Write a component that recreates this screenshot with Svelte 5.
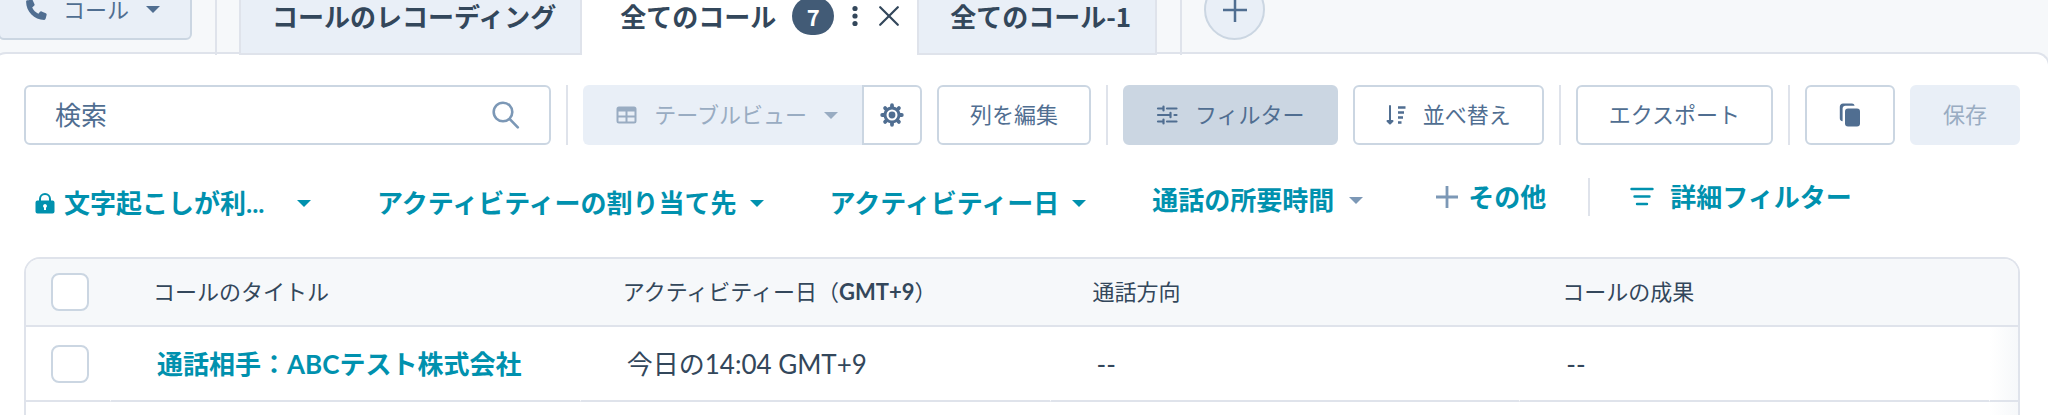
<script>
    let search = $state('');

    const tabs = [
        { label: 'コールのレコーディング' },
        { label: '全てのコール', count: 7, active: true },
        { label: '全てのコール-1' }
    ];

    const filters = [
        { label: '文字起こしが利...', kind: 'locked' },
        { label: 'アクティビティーの割り当て先', kind: 'pinned' },
        { label: 'アクティビティー日', kind: 'pinned' },
        { label: '通話の所要時間', kind: 'unset' }
    ];

    const calls = [
        { title: '通話相手：ABCテスト株式会社', date: '今日の14:04 GMT+9', direction: '--', outcome: '--' },
        { title: '', date: '', direction: '', outcome: '' }
    ];
</script>

{#snippet caret()}
    <svg class="caret" width="14" height="7" viewBox="0 0 14 7" aria-hidden="true"><path d="M0 0h14L7 7z" fill="currentColor" /></svg>
{/snippet}

<div class="page">
    <header class="topbar">
        <button class="object-switch" aria-haspopup="menu">
            <svg width="22" height="22" viewBox="0 0 22 22" aria-hidden="true">
                <path d="M3.6 1.2 6 .3c.7-.2 1.300 0 1.600.7l1.900 4.200c.3.6.1 1.200-.4 1.600L7.200 8.400c1.300 2.700 3.400 4.900 6.200 6.300l1.600-1.900c.4-.5 1-.7 1.600-.4l4.200 1.800c.7.3 1 1 .8 1.700l-1 3.900c-.2.7-.7 1.100-1.400 1.100C9.300 20.900 1.100 12.700 1.100 2.800c0-.8.300-1.400 1-1.600z" fill="currentColor" />
            </svg>
            <span>コール</span>
            {@render caret()}
        </button>
        <div class="tabs">
            {#each tabs as tab}
                <div class="tab" class:active={tab.active}>
                    <a href="#view">{tab.label}</a>
                    {#if tab.active}
                        <span class="badge">{tab.count}</span>
                        <button class="bare dots" aria-label="オプション">
                            <svg width="6" height="22" viewBox="0 0 6 22" fill="currentColor" aria-hidden="true">
                                <circle cx="3" cy="3.500" r="2.600" /><circle cx="3" cy="11" r="2.600" /><circle cx="3" cy="18.500" r="2.600" />
                            </svg>
                        </button>
                        <button class="bare" aria-label="閉じる">
                            <svg width="20" height="20" viewBox="0 0 20 20" fill="none" stroke="currentColor" stroke-width="2.200" stroke-linecap="round" aria-hidden="true">
                                <path d="M1.200 1.200l17.600 17.600M18.800 1.200 1.200 18.800" />
                            </svg>
                        </button>
                    {/if}
                </div>
            {/each}
        </div>
        <button class="add-view" aria-label="ビューを追加">
            <svg width="24" height="24" viewBox="0 0 24 24" stroke="currentColor" stroke-width="2.500" aria-hidden="true"><path d="M12 0v24M0 12h24" /></svg>
        </button>
    </header>

    <main class="panel">
        <div class="toolbar">
            <label class="search">
                <input type="text" bind:value={search} placeholder="検索" aria-label="検索" />
                <svg width="28" height="28" viewBox="0 0 28 28" fill="none" stroke="currentColor" stroke-width="2.600" stroke-linecap="round" aria-hidden="true">
                    <circle cx="11" cy="11" r="9.300" /><path d="M17.800 18.200l8 8.200" />
                </svg>
            </label>
            <span class="rule"></span>
            <div class="view-group">
                <button class="btn off view" disabled>
                    <svg width="21" height="18" viewBox="0 0 21 18" aria-hidden="true">
                        <path fill-rule="evenodd" d="M3 .5h15A2.500 2.500 0 0 1 20.500 3v12a2.500 2.500 0 0 1-2.500 2.500H3A2.500 2.500 0 0 1 .5 15V3A2.500 2.500 0 0 1 3 .5zM2.500 5.500v4h7v-4zM11.500 5.500v4h7v-4zM2.500 11.500v4h7v-4zM11.500 11.500v4h7v-4z" fill="currentColor" />
                    </svg>
                    <span>テーブルビュー</span>
                    {@render caret()}
                </button>
                <button class="btn gear" aria-label="設定">
                    <svg width="24" height="24" viewBox="-12 -12 24 24" aria-hidden="true">
                        <circle r="7" fill="none" stroke="currentColor" stroke-width="3" />
                        <circle r="3.400" fill="currentColor" />
                        <g stroke="currentColor" stroke-width="3.800" stroke-linecap="round">
                            <path d="M0-9.800V-8M0 9.800V8M-9.800 0H-8M9.800 0H8M-6.900-6.900l1.200 1.200M6.900 6.900 5.700 5.700M-6.900 6.900l1.200-1.200M6.900-6.900 5.700-5.700" />
                        </g>
                    </svg>
                </button>
            </div>
            <button class="btn">列を編集</button>
            <span class="rule"></span>
            <button class="btn pressed" aria-pressed="true">
                <svg width="22" height="20" viewBox="0 0 22 20" fill="none" stroke="currentColor" stroke-width="2.200" stroke-linecap="round" aria-hidden="true">
                    <path d="M2 3.500h5.500M11 3.500h9.500M2 10h12.500M18.500 10h2M2 16.500h5.500M11 16.500h9.500M7.500 1.500v4M14.500 7.800v4.400M7.500 14.500v4" />
                </svg>
                <span>フィルター</span>
            </button>
            <button class="btn">
                <svg width="20" height="20" viewBox="0 0 20 20" aria-hidden="true">
                    <path d="M4 1v17M1.500 16h5L4 18.500z" fill="currentColor" stroke="currentColor" stroke-width="2" stroke-linejoin="round" stroke-linecap="round" />
                    <path d="M12 2.500h7.500M12 7.500h6M12 12.500h5M12 17.500h3.500" stroke="currentColor" stroke-width="2.500" />
                </svg>
                <span>並べ替え</span>
            </button>
            <span class="rule"></span>
            <button class="btn">エクスポート</button>
            <span class="rule"></span>
            <button class="btn copy" aria-label="コピー">
                <svg width="22" height="24" viewBox="0 0 22 24" aria-hidden="true">
                    <path d="M4 .5h9c1.400 0 2.200.8 2.600 2.200H6.500C4.800 2.700 3.600 4 3.600 5.600v12.600C1.800 17.900.8 17 .8 15.200V3.700C.8 1.800 2.100.5 4 .5z" fill="currentColor" />
                    <rect x="6" y="5.500" width="15" height="18" rx="3" fill="currentColor" />
                </svg>
            </button>
            <button class="btn off" disabled>保存</button>
        </div>

        <div class="filter-row">
            <div class="quick">
                {#each filters as filter}
                    <button class="filter {filter.kind}" aria-haspopup="listbox">
                        {#if filter.kind === 'locked'}
                            <svg width="20" height="21" viewBox="0 0 20 21" aria-hidden="true">
                                <path d="M5 9V6a5 5 0 0 1 10 0v3" fill="none" stroke="currentColor" stroke-width="2" />
                                <path fill-rule="evenodd" d="M2.500 7.500h15a2 2 0 0 1 2 2v9a2 2 0 0 1-2 2h-15a2 2 0 0 1-2-2v-9a2 2 0 0 1 2-2zM10 11a2 2 0 0 0-1 3.700V17h2v-2.300A2 2 0 0 0 10 11z" fill="currentColor" />
                            </svg>
                        {/if}
                        <span>{filter.label}</span>
                        {@render caret()}
                    </button>
                {/each}
            </div>
            <button class="filter more">
                <svg width="24" height="24" viewBox="0 0 24 24" stroke="currentColor" stroke-width="2.800" aria-hidden="true"><path d="M12 1v22M1 12h22" /></svg>
                <span>その他</span>
            </button>
            <span class="rule"></span>
            <button class="filter advanced">
                <svg width="24" height="20" viewBox="0 0 24 20" stroke="currentColor" stroke-width="2.400" stroke-linecap="round" aria-hidden="true"><path d="M1.500 2h21M4.500 9.500h15M7 17h10" /></svg>
                <span>詳細フィルター</span>
            </button>
        </div>

        <div class="table-wrap">
            <table>
                <colgroup>
                    <col class="col-check" /><col /><col /><col /><col /><col class="col-end" />
                </colgroup>
                <thead>
                    <tr>
                        <th class="check"><input type="checkbox" aria-label="全て選択" /></th>
                        <th>コールのタイトル</th>
                        <th>アクティビティー日（<b>GMT+9</b>）</th>
                        <th>通話方向</th>
                        <th>コールの成果</th>
                        <th></th>
                    </tr>
                </thead>
                <tbody>
                    {#each calls as call}
                        <tr>
                            <td class="check"><input type="checkbox" aria-label="選択" /></td>
                            <td>{#if call.title}<a href="#call">{call.title}</a>{/if}</td>
                            <td>{call.date}</td>
                            <td>{call.direction}</td>
                            <td>{call.outcome}</td>
                            <td class="fade"></td>
                        </tr>
                    {/each}
                </tbody>
            </table>
        </div>
    </main>
</div>

<style>
    :global(body) {
        margin: 0;
        background: #f6f8fa;
    }

    .page {
        height: 100vh;
        overflow: hidden;
        display: flex;
        flex-direction: column;
        color: #33475b;
        font-family: Lato, 'Noto Sans CJK JP', sans-serif;
        font-size: 26px;
        line-height: 36px;
    }

    * {
        box-sizing: border-box;
    }

    svg {
        display: block;
        flex: none;
    }

    button,
    input {
        font: inherit;
        margin: 0;
    }

    button {
        display: flex;
        align-items: center;
        white-space: nowrap;
        cursor: pointer;
    }

    a {
        color: inherit;
        text-decoration: none;
    }

    .topbar {
        flex: none;
        display: flex;
        align-items: flex-start;
        height: 74px;
        margin-top: -21px;
    }

    .object-switch {
        height: 61px;
        width: 194px;
        margin-left: -2px;
        padding: 0 30px 0 25px;
        gap: 16px;
        border: 2px solid #cbd6e2;
        border-radius: 6px;
        background: #e9eff7;
        color: #506e91;
        font-size: 22px;
    }

    .object-switch .caret {
        margin-left: auto;
    }

    .tabs {
        position: relative;
        z-index: 1;
        display: flex;
        height: 76px;
        margin-left: 23px;
        padding: 0 23px 0 22px;
        border: solid #dfe3eb;
        border-width: 0 2px;
        font-family: 'Noto Sans CJK JP', sans-serif;
        font-weight: 700;
    }

    .tab {
        display: flex;
        align-items: center;
        padding: 0 24px 0 31px;
        border: 2px solid #dfe3eb;
        border-width: 0 2px 2px;
        background: #e9eff7;
    }

    .tab.active {
        padding: 0 16px 0 36px;
        border-color: #fff;
        background: #fff;
    }

    .badge {
        min-width: 42px;
        margin-left: 16px;
        border-radius: 21px;
        background: #425b76;
        color: #fff;
        font-size: 22px;
        line-height: 38px;
        text-align: center;
    }

    .bare {
        padding: 0;
        border: 0;
        background: none;
        color: inherit;
    }

    .dots {
        margin: 0 21px 0 18px;
    }

    .add-view {
        width: 61px;
        height: 61px;
        margin-left: 22px;
        padding: 0;
        justify-content: center;
        border: 2px solid #cbd6e2;
        border-radius: 50%;
        background: #e9eff7;
        color: #506e91;
    }

    .panel {
        flex: 1;
        margin: -1px -2px 0 -8px;
        padding: 31px 28px 0 30px;
        border: 2px solid #dfe3eb;
        border-bottom: 0;
        border-radius: 14px 14px 0 0;
        background: #fff;
    }

    .toolbar {
        display: flex;
        gap: 15px;
        height: 60px;
    }

    .rule {
        flex: none;
        width: 2px;
        background: #dfe3eb;
    }

    .search {
        flex: 1;
        display: flex;
        align-items: center;
        padding: 0 29px;
        border: 2px solid #cbd6e2;
        border-radius: 6px;
        color: #7c98b6;
    }

    .search input {
        flex: 1;
        min-width: 0;
        padding: 0;
        border: 0;
        outline: 0;
        background: none;
        color: #33475b;
    }

    .search input::placeholder {
        color: #506e91;
        opacity: 1;
    }

    .btn {
        justify-content: center;
        gap: 17px;
        padding: 0 31px;
        border: 2px solid #cbd6e2;
        border-radius: 6px;
        background: #fff;
        color: #506e91;
        font-size: 22px;
    }

    .btn.pressed {
        border-color: #cbd6e2;
        background: #cbd6e2;
    }

    .btn.off {
        border-color: #e9eff7;
        background: #e9eff7;
        color: #99acc2;
        cursor: default;
    }

    .view-group {
        display: flex;
    }

    .view-group .view {
        padding: 0 24px 0 31px;
        border-right: 0;
        border-radius: 6px 0 0 6px;
    }

    .view-group .gear {
        width: 60px;
        padding: 0;
        border-radius: 0 6px 6px 0;
    }

    .btn.copy {
        width: 90px;
    }

    .filter-row {
        display: flex;
        height: 38px;
        margin: 33px 0 41px;
        padding-left: 11px;
    }

    .quick {
        display: flex;
        gap: 66px;
        padding-top: 12px;
    }

    .filter {
        gap: 9px;
        padding: 0;
        border: 0;
        background: none;
        color: #0091ae;
        font-weight: 700;
    }

    .filter.locked span {
        min-width: 224px;
        text-align: left;
    }

    .filter.pinned {
        gap: 13px;
    }

    .filter.unset {
        gap: 15px;
        padding-bottom: 6px;
    }

    .filter.unset .caret,
    .filter.more svg {
        color: #7c98b6;
    }

    .filter.more {
        margin: 0 42px 0 72px;
    }

    .filter.advanced {
        gap: 16px;
        margin-left: 40px;
    }

    .table-wrap {
        overflow: hidden;
        border: 2px solid #dfe3eb;
        border-bottom: 0;
        border-radius: 16px 16px 0 0;
    }

    table {
        width: 100%;
        table-layout: fixed;
        border-spacing: 0;
    }

    .col-check {
        width: 85px;
    }

    .col-end {
        width: 28px;
    }

    th {
        height: 68px;
        padding: 0 0 0 42px;
        border-bottom: 2px solid #dfe3eb;
        background: #f6f8fa;
        font-size: 22px;
        font-weight: 400;
        text-align: left;
    }

    td {
        height: 75px;
        padding: 0 0 0 46px;
        border-right: 1px solid #fff;
        border-bottom: 2px solid #dfe3eb;
    }

    td a {
        color: #0091ae;
        font-weight: 700;
    }

    .check {
        padding: 0 0 0 25px;
    }

    .fade {
        padding: 0;
        border-right: 0;
        background: linear-gradient(to right, #fff, #f6f8fa);
    }

    input[type='checkbox'] {
        display: block;
        appearance: none;
        width: 38px;
        height: 38px;
        border: 2px solid #cbd6e2;
        border-radius: 8px;
        background: #fff;
    }
</style>
